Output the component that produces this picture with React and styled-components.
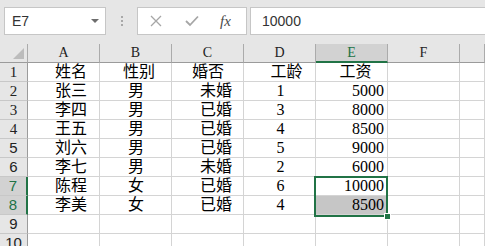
import React from "react";
import styled, { createGlobalStyle } from "styled-components";

const GlobalStyle = createGlobalStyle`
  body {
    margin: 0;
    background: #ffffff;
  }
  * { box-sizing: border-box; }
`;

const Page = styled.div`
  width: 485px;
  height: 246px;
  overflow: hidden;
  background: #ffffff;
`;

const Toolbar = styled.div`
  height: 44px;
  background: #e6e6e6;
  display: flex;
  align-items: flex-start;
  padding: 7px 0 0 4px;
`;

const NameBox = styled.div`
  width: 102px;
  height: 28px;
  background: #ffffff;
  border: 1px solid #c6c6c6;
  display: flex;
  align-items: center;
  justify-content: space-between;
  padding: 0 6px 0 7px;
  font-family: "Liberation Sans", "Noto Sans", sans-serif;
  font-size: 14px;
  color: #333333;
`;

const Caret = styled.span`
  width: 0;
  height: 0;
  border-left: 4px solid transparent;
  border-right: 4px solid transparent;
  border-top: 4px solid #6d6d6d;
`;

const Grip = styled.div`
  width: 31px;
  height: 28px;
  display: flex;
  flex-direction: column;
  align-items: center;
  justify-content: center;
  gap: 2px;
  span {
    width: 2px;
    height: 2px;
    background: #a8a8a8;
  }
`;

const FxBox = styled.div`
  width: 110px;
  height: 28px;
  background: #ffffff;
  border: 1px solid #c6c6c6;
  display: flex;
  align-items: center;
  padding: 0 0 0 12px;
  gap: 23px;
  color: #a6a6a6;
`;

const Fx = styled.span`
  font-family: "Liberation Serif", serif;
  font-style: italic;
  font-size: 15px;
  color: #4a4a4a;
  margin-left: -2px;
`;

const FormulaBar = styled.div`
  flex: 1;
  height: 28px;
  margin-left: 3px;
  background: #ffffff;
  border: 1px solid #c6c6c6;
  border-right: none;
  display: flex;
  align-items: center;
  padding-left: 11px;
  font-family: "Liberation Sans", "Noto Sans", sans-serif;
  font-size: 14px;
  color: #333333;
`;

const Sheet = styled.div`
  position: relative;
  display: grid;
  grid-template-columns: 28px repeat(6, 72px) 1fr;
  grid-auto-rows: 19px;
`;

const ColHead = styled.div`
  height: 19px;
  background: ${({ $active }) => ($active ? "#d2d2d2" : "#e6e6e6")};
  border-right: 1px solid #ababab;
  border-bottom: ${({ $active }) => ($active ? "2px solid #217346" : "1px solid #9b9b9b")};
  color: ${({ $active }) => ($active ? "#217346" : "#222222")};
  font-family: "Liberation Serif", serif;
  font-size: 14px;
  line-height: 18px;
  text-align: center;
`;

const Corner = styled(ColHead)`
  position: relative;
  &::after {
    content: "";
    position: absolute;
    right: 3px;
    bottom: 3px;
    width: 0;
    height: 0;
    border-left: 11px solid transparent;
    border-bottom: 11px solid #bcbcbc;
  }
`;

const RowHead = styled.div`
  background: ${({ $active }) => ($active ? "#d2d2d2" : "#e6e6e6")};
  border-right: ${({ $active }) => ($active ? "2px solid #217346" : "1px solid #9b9b9b")};
  border-bottom: 1px solid #c8c8c8;
  color: ${({ $active }) => ($active ? "#217346" : "#222222")};
  font-family: ${({ $serif }) =>
    $serif ? '"Liberation Serif", serif' : '"Liberation Sans", "Noto Sans", sans-serif'};
  font-size: 15px;
  line-height: 18px;
  text-align: center;
`;

const Cell = styled.div`
  border-right: 1px solid #d4d4d4;
  border-bottom: 1px solid #d4d4d4;
  background: ${({ $fill }) => ($fill ? "#c6c6c6" : "#ffffff")};
  font-family: "Liberation Serif", "Noto Sans CJK SC", serif;
  font-size: 16px;
  line-height: 18px;
  color: #000000;
  white-space: nowrap;
  overflow: hidden;
  text-align: ${({ $align }) => $align || "left"};
  padding-left: ${({ $pl }) => $pl || 0}px;
  padding-right: ${({ $pr }) => $pr || 0}px;
`;

const Selection = styled.div`
  position: absolute;
  left: 314px;
  top: 132px;
  width: 74px;
  height: 41px;
  border: 2px solid #217346;
  pointer-events: none;
`;

const Handle = styled.div`
  position: absolute;
  right: -5px;
  bottom: -5px;
  width: 7px;
  height: 7px;
  background: #217346;
  border: 1px solid #ffffff;
`;

const cols = ["A", "B", "C", "D", "E", "F"];

const headerRow = {
  cells: ["姓名", "性别", "婚否", "工龄", "工资"],
  layout: [
    { $align: "center", $pl: 15 },
    { $align: "center", $pl: 7 },
    { $align: "left", $pl: 20 },
    { $align: "center", $pl: 14 },
    { $align: "center", $pl: 8 },
  ],
};

const dataLayout = [
  { $align: "center", $pl: 15 },
  { $align: "center", $pl: 1 },
  { $align: "right", $pr: 11 },
  { $align: "center", $pl: 2 },
  { $align: "right", $pr: 3 },
];

const people = [
  ["张三", "男", "未婚", "1", "5000"],
  ["李四", "男", "已婚", "3", "8000"],
  ["王五", "男", "已婚", "4", "8500"],
  ["刘六", "男", "已婚", "5", "9000"],
  ["李七", "男", "未婚", "2", "6000"],
  ["陈程", "女", "已婚", "6", "10000"],
  ["李美", "女", "已婚", "4", "8500"],
];

const X = () => (
  <svg width="12" height="12" viewBox="0 0 12 12">
    <path d="M1 1 L11 11 M11 1 L1 11" stroke="#a6a6a6" strokeWidth="1.3" fill="none" />
  </svg>
);

const Check = () => (
  <svg width="14" height="12" viewBox="0 0 14 12">
    <path d="M1 6 L5 10 L13 1.5" stroke="#a6a6a6" strokeWidth="1.8" fill="none" />
  </svg>
);

const App = () => {
  const rows = [headerRow, ...people.map((p) => ({ cells: p, layout: dataLayout }))];
  return (
    <Page>
      <GlobalStyle />
      <Toolbar>
        <NameBox>
          E7
          <Caret />
        </NameBox>
        <Grip>
          <span />
          <span />
          <span />
        </Grip>
        <FxBox>
          <X />
          <Check />
          <Fx>fx</Fx>
        </FxBox>
        <FormulaBar>10000</FormulaBar>
      </Toolbar>
      <Sheet>
        <Corner />
        {cols.map((c) => (
          <ColHead key={c} $active={c === "E"}>
            {c}
          </ColHead>
        ))}
        <ColHead />
        {rows.map((row, r) => (
          <React.Fragment key={r}>
            <RowHead $active={r === 6 || r === 7} $serif={r < 4}>
              {r + 1}
            </RowHead>
            {row.cells.map((v, c) => (
              <Cell key={c} {...row.layout[c]} $fill={r === 7 && c === 4}>
                {v}
              </Cell>
            ))}
            <Cell />
            <Cell />
          </React.Fragment>
        ))}
        {[9, 10].map((n) => (
          <React.Fragment key={n}>
            <RowHead>{n}</RowHead>
            {cols.map((c) => (
              <Cell key={c} />
            ))}
            <Cell />
          </React.Fragment>
        ))}
        <Selection>
          <Handle />
        </Selection>
      </Sheet>
    </Page>
  );
};

export default App;
